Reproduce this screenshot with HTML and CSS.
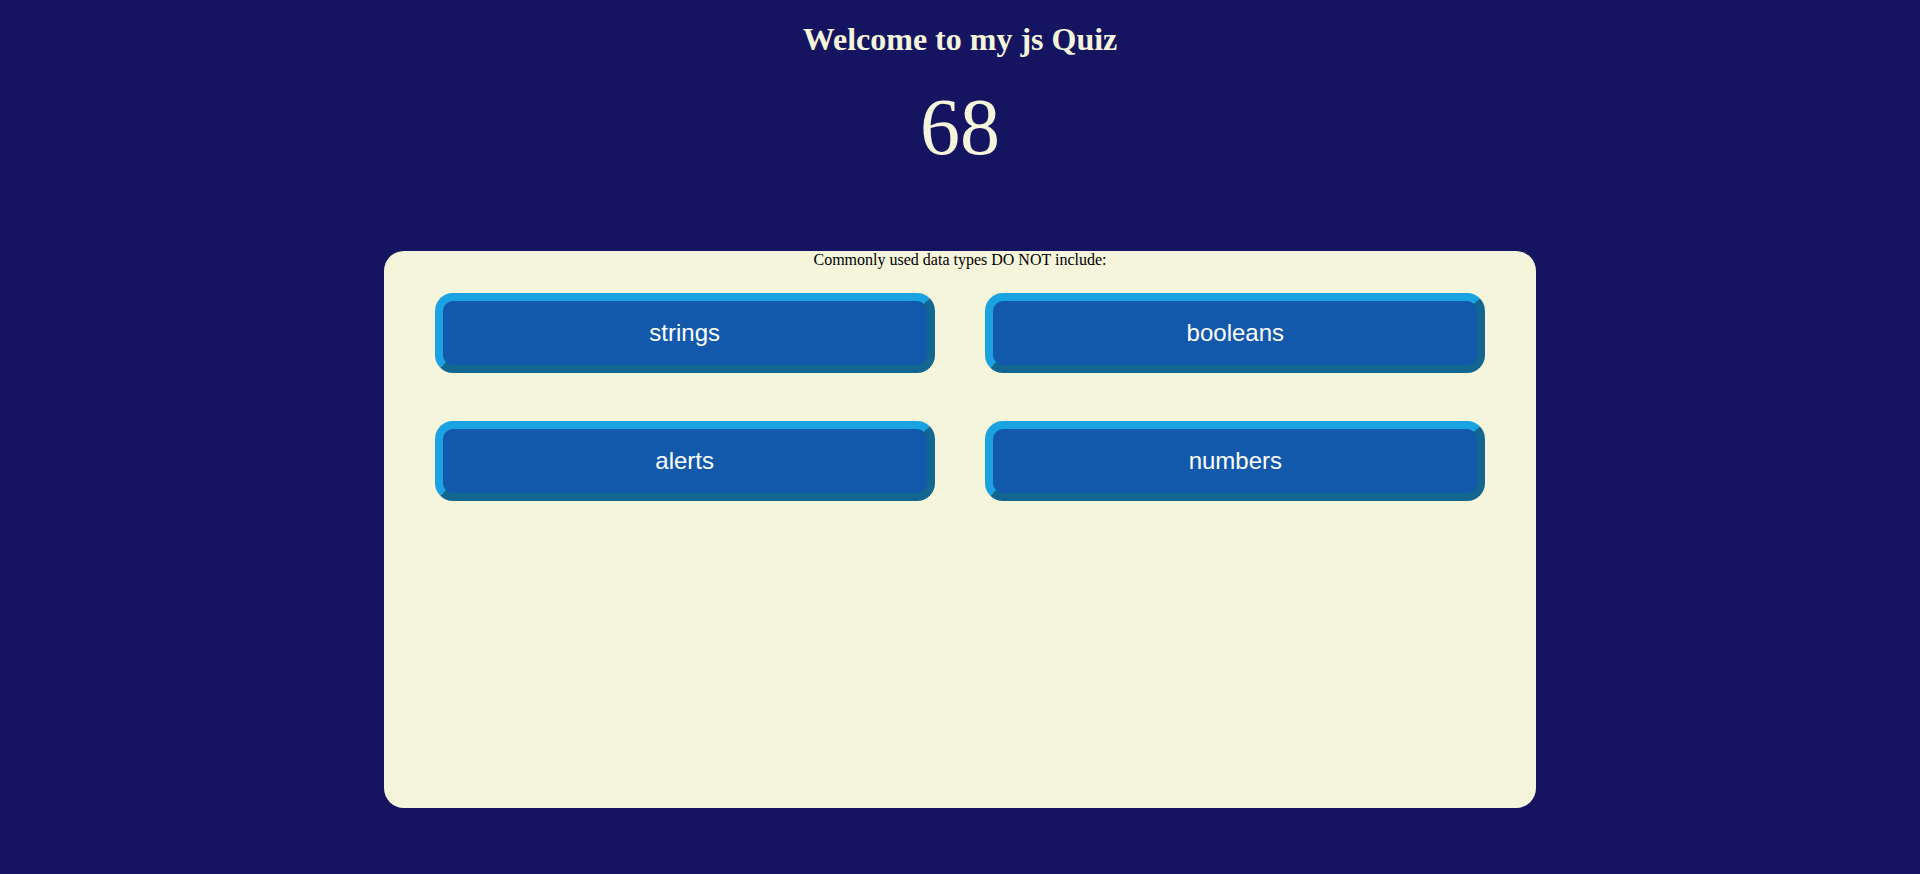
FILE: index.html
```html
<!DOCTYPE html>
<html lang="en">
<head>
<meta charset="utf-8">
<title>JS Quiz</title>
<link rel="stylesheet" href="styles.css">
</head>
<body>
  <h1 class="title">Welcome to my js Quiz</h1>
  <div class="timer">68</div>
  <main class="card">
    <p class="question">Commonly used data types DO NOT include:</p>
    <div class="choices">
      <button class="choice">strings</button>
      <button class="choice">booleans</button>
      <button class="choice">alerts</button>
      <button class="choice">numbers</button>
    </div>
  </main>
</body>
</html>
```

FILE: styles.css
```css
html, body {
  margin: 0;
  padding: 0;
}

body {
  background: #141461;
  font-family: "Liberation Serif", "Times New Roman", serif;
  color: #f5f5dc;
  height: 874px;
  overflow: hidden;
}

.title {
  font-size: 32px;
  font-weight: bold;
  text-align: center;
  margin: 21px 0 24px;
  line-height: normal;
}

.timer {
  font-size: 80px;
  text-align: center;
  line-height: normal;
}

.card {
  width: 60%;
  height: 557px;
  margin: 78px auto 0;
  background: #f5f5dc;
  border-radius: 20px;
  color: #000;
  box-sizing: border-box;
}

.question {
  margin: 0;
  font-size: 16px;
  text-align: center;
}

.choices {
  display: flex;
  flex-wrap: wrap;
  justify-content: space-evenly;
  row-gap: 48px;
  padding-top: 24px;
}

.choice {
  width: 500px;
  height: 80px;
  box-sizing: border-box;
  border: 8px solid;
  border-color: #1aa3e0 #13668f #13668f #1aa3e0;
  border-radius: 18px;
  background: #1259ab;
  color: #ffffff;
  font-family: "Liberation Sans", Arial, sans-serif;
  font-size: 24px;
  padding: 0;
}
```
